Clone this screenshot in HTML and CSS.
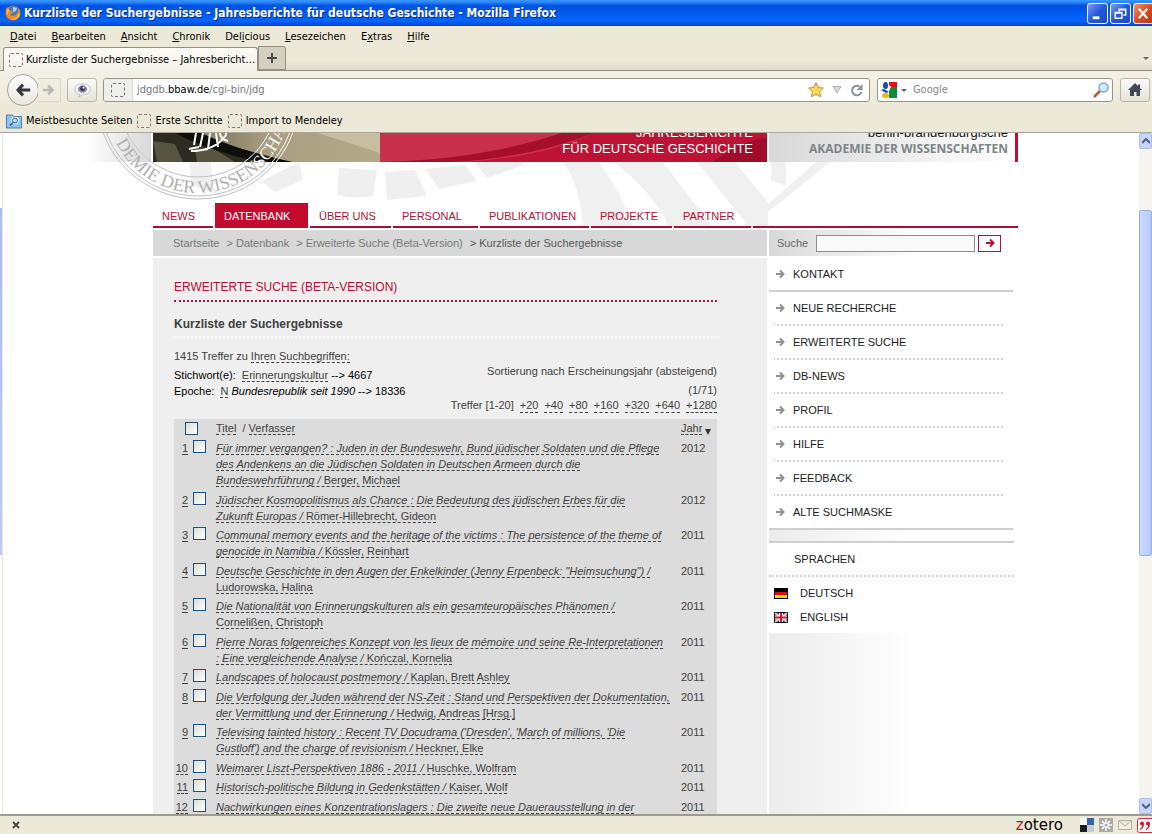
FILE: index.html
```html
<!DOCTYPE html>
<html lang="de">
<head>
<meta charset="utf-8">
<title>Kurzliste der Suchergebnisse - Jahresberichte für deutsche Geschichte</title>
<link rel="stylesheet" href="styles.css">
</head>
<body>
<div class="titlebar">
  <svg class="fox" viewBox="0 0 16 16"><circle cx="8" cy="8" r="7.5" fill="#e46a10"/><circle cx="8.5" cy="6" r="5" fill="#3c79c8"/><path d="M8 2l4 1-1 3-3 1z" fill="#a9d3f2"/><path d="M1 4l2-2 1 3 3 1 1 2-3 1 2 2 4-1 2-3 0-4 2 3c1 5-2 9-7 9S0 11 1 4z" fill="#f08a1c"/><path d="M3 3l1 3-2 4c-1-3 0-5 1-7zM13 10c-1 3-4 4-7 4 4 2 9-1 9-6z" fill="#ffc53a"/></svg>
  <h1 class="window-title">Kurzliste der Suchergebnisse - Jahresberichte für deutsche Geschichte - Mozilla Firefox</h1>
  <button class="winbtn" aria-label="Minimieren"><svg viewBox="0 0 20 20"><path d="M5 13h7v3H5z" fill="#fff"/></svg></button>
  <button class="winbtn" aria-label="Wiederherstellen"><svg viewBox="0 0 20 20"><path d="M8.500 8V5.500h7v6H13M4.500 9h7v6h-7z M4 9.500h8M8 6h8" fill="none" stroke="#fff" stroke-width="1.500"/></svg></button>
  <button class="winbtn close" aria-label="Schließen"><svg viewBox="0 0 20 20"><path d="M5 5l9 10M14 5l-9 10" stroke="#fff" stroke-width="2.200"/></svg></button>
</div>
<nav class="menubar">
  <a href="#"><u>D</u>atei</a><a href="#"><u>B</u>earbeiten</a><a href="#"><u>A</u>nsicht</a><a href="#"><u>C</u>hronik</a><a href="#">Del<u>i</u>cious</a><a href="#"><u>L</u>esezeichen</a><a href="#">E<u>x</u>tras</a><a href="#"><u>H</u>ilfe</a>
</nav>
<div class="tabs">
  <button class="tab"><span class="blank-icon"></span><span>Kurzliste der Suchergebnisse – Jahresbericht…</span></button>
  <button class="newtab" aria-label="Neuer Tab"><svg viewBox="0 0 12 12"><path d="M6 1v10M1 6h10" stroke="#454b50" stroke-width="2"/></svg></button>
  <span class="spacer"></span>
  <span class="caret"></span>
</div>
<div class="toolbar">
  <button class="back" aria-label="Zurück"><svg viewBox="0 0 20 20"><path d="M10 4L4.500 10l5.500 6M5 10h13" fill="none" stroke="#30383e" stroke-width="3.400"/></svg></button>
  <button class="forward" aria-label="Vor"><svg viewBox="0 0 16 16"><path d="M7 3l5 5-5 5M1 8h11" fill="none" stroke="#b4b7b6" stroke-width="3"/></svg></button>
  <button class="eye" aria-label="Vorschau"><svg viewBox="0 0 18 16"><path d="M9 1c5 0 8 2 8 6s-3 5-7 5l-5 3 1-3C3 11 1 9 1 7c0-4 3-6 8-6z" fill="#fff" stroke="#b4b4bb"/><ellipse cx="9" cy="6.500" rx="5" ry="4" fill="#8c8ca4"/><circle cx="9" cy="6" r="2.500" fill="#30304a"/><circle cx="10" cy="5" r="1" fill="#fff"/></svg></button>
  <div class="urlbox">
    <span class="identity"><span class="blank-icon"></span></span>
    <span class="url">jdgdb.<b>bbaw.de</b>/cgi-bin/jdg</span>
    <svg class="i16" viewBox="0 0 16 16"><path d="M8 .800l2.200 4.700 5.200.600-3.800 3.500 1 5.200L8 12.200l-4.600 2.600 1-5.200L.600 6.100l5.200-.600z" fill="#ffd75e" stroke="#c99137"/></svg>
    <svg class="i10" viewBox="0 0 10 10"><path d="M1 1.500h8L5 8z" fill="#d8d8de" stroke="#b0b0b6"/></svg>
    <svg class="i14" viewBox="0 0 14 14"><path d="M11.500 9A4.800 4.800 0 1 1 9.500 3.500" fill="none" stroke="#8b939c" stroke-width="2"/><path d="M12.500 1v6h-6z" fill="#8b939c"/></svg>
  </div>
  <div class="searchbox">
    <svg class="i16" viewBox="0 0 16 16"><path d="M8 0h8v5H8z" fill="#e01414"/><path d="M10 5h6v11H8V9q0-3 2-4z" fill="#118a3c"/><ellipse cx="4.500" cy="3.500" rx="2.500" ry="3.500" fill="#174bb0"/><path d="M0 8l3-1 5 3-3 1z" fill="#174bb0"/><ellipse cx="4.500" cy="13.500" rx="3.500" ry="2.500" fill="#f2b516"/><path d="M7 2l3 3-2 4z" fill="#fff"/></svg>
    <span class="caret"></span>
    <input aria-label="Google-Suche" placeholder="Google">
    <svg class="i16" viewBox="0 0 16 16"><path d="M1 15l6-6" stroke="#b4632c" stroke-width="2.600"/><circle cx="10.500" cy="5.500" r="4.500" fill="#d5ebfb" stroke="#84abd8" stroke-width="1.600"/></svg>
  </div>
  <button class="home" aria-label="Startseite"><svg viewBox="0 0 16 16"><path d="M8 1L1 8h2v6h4v-4h2.500v4H13V8h2l-2-2V2.500h-2V4z" fill="#3f4a54"/></svg></button>
</div>
<nav class="bookmarks">
  <a href="#"><svg class="i16" viewBox="0 0 16 16"><path d="M.500 2h6l1 1.500h8V15H.500z" fill="#8fc3ea" stroke="#3f83bb"/><circle cx="9" cy="7.500" r="2.500" fill="none" stroke="#fff" stroke-width="2.500"/><circle cx="9" cy="7.500" r="2.500" fill="#b9dcf5" stroke="#225f95"/><path d="M7 9.500l-3 3" stroke="#225f95" stroke-width="1.500"/></svg>Meistbesuchte Seiten</a>
  <a href="#"><span class="blank-icon"></span>Erste Schritte</a>
  <a href="#"><span class="blank-icon"></span>Import to Mendeley</a>
</nav>
<div class="viewport">
  <div class="window-edge"></div>
  <div class="page">
    <header class="header">
      <div class="side-fade"></div>
      <div class="photo"></div>
      <div class="redband"><p>JAHRESBERICHTE<br>FÜR DEUTSCHE GESCHICHTE</p></div>
      <div class="academy"><p><span>berlin-brandenburgische</span><br>AKADEMIE DER WISSENSCHAFTEN</p></div>
    </header>
    <svg class="artwork" viewBox="0 0 865 95" preserveAspectRatio="none">
      <path d="M36 29h22l2 25 12 10-34-12zM108 48l38-19 4 18-28 12zM186 35l38 2-4 26q-24 4-36-2zM232 39l30-2 12 26-40 4zM272 36l40-4 12 16-38 8zM322 29h50l-4 4-34 12z" fill="#efefef"/>
      <path d="M410 29h36q22 30 34 66h-50q-2-40-20-66zM460 29h50l50 66h-43q-20-40-57-66zM544 29h38l33 40v26h-18zM618 29h15v24l-15-6zM614 72l49-43h14l-49 40-14 10z" fill="#f0f0f0"/>
    </svg>
    <svg class="photo-art" viewBox="0 0 865 95" preserveAspectRatio="none">
      <path d="M0 0h30L137 29H0z" fill="#2c2b20"/><path d="M0 8l22 3 8 18H4zM42 16l16-2 24 15H44z" fill="#57543f"/>
      <path d="M22 0h26q44 20 92 29h-32Q60 20 22 0z" fill="#0e0f0d"/><path d="M165 0h62v20z" fill="#c9bda0"/>
      <path d="M227 29q100-2 182-29h32q-60 24-140 29z" fill="#a50f2b"/><path d="M440 0h174v29H315q80-6 125-29z" fill="#bd1334"/><path d="M560 29q30-22 54-24v24z" fill="#a10c2a"/>
      <g fill="none" stroke="#fff" stroke-width="2"><path d="M43 0l-2 12m9-12l-3 14m10-14l-2 16m8-16l2 14m2-14q0 6 8 8m-37 10q24 0 35-16l0-4M36 16l10-2m-3 4l12-2"/></g>
    </svg>
    <svg class="seal" viewBox="0 0 210 76">
      <defs><path id="ring" d="M11-29A92 92 0 0 0 195-29"/><clipPath id="onphoto"><path d="M58 3h152v29H58z"/></clipPath><clipPath id="offphoto"><path d="M0 3h58v29h152v47H0z"/></clipPath>
      <g id="sealart"><circle cx="103" cy="-32" r="101"/><circle cx="103" cy="-32" r="98"/><circle cx="103" cy="-32" r="79"/><text><textPath href="#ring" startOffset="15%">DEMIE DER WISSENSCHAFT</textPath></text></g></defs>
      <g class="ring-grey" clip-path="url(#offphoto)"><use href="#sealart"/></g>
      <g class="ring-white" clip-path="url(#onphoto)"><use href="#sealart"/></g>
    </svg>
    <nav class="nav">
      <a href="#" class="n1">NEWS</a><a href="#" class="n2 active">DATENBANK</a><a href="#" class="n3">ÜBER UNS</a><a href="#" class="n4">PERSONAL</a><a href="#" class="n5">PUBLIKATIONEN</a><a href="#" class="n6">PROJEKTE</a><a href="#" class="n7">PARTNER</a><span></span>
    </nav>
    <div class="strip">
      <div class="crumbs"><a href="#">Startseite</a><a href="#">&gt; Datenbank</a><a href="#">&gt; Erweiterte Suche (Beta-Version)</a><span>&gt; Kurzliste der Suchergebnisse</span></div>
      <form class="find"><label for="q">Suche</label><input id="q"><button type="button" aria-label="Suchen"><svg viewBox="0 0 10 10"><path d="M1 5h7M5 1.500L8.500 5 5 8.500" fill="none" stroke="#b40f35" stroke-width="2"/></svg></button></form>
    </div>
    <div class="columns">
      <main class="main">
        <h2>ERWEITERTE SUCHE (BETA-VERSION)</h2>
        <h3>Kurzliste der Suchergebnisse</h3>
        <div class="summary">
          <div class="terms">
            <p class="hits">1415 Treffer zu <a href="#">Ihren Suchbegriffen:</a></p>
            <p>Stichwort(e): &nbsp;<a href="#">Erinnerungskultur</a> --&gt; 4667</p>
            <p>Epoche: &nbsp;<a href="#">N</a> <i>Bundesrepublik seit 1990</i> --&gt; 18336</p>
          </div>
          <div class="sorting">
            <p class="sort">Sortierung nach Erscheinungsjahr (absteigend)</p>
            <p>(1/71)</p>
            <p class="pager"><span>Treffer [1-20]</span><a href="#">+20</a><a href="#">+40</a><a href="#">+80</a><a href="#">+160</a><a href="#">+320</a><a href="#">+640</a><a href="#">+1280</a></p>
          </div>
        </div>
        <table class="results">
          <colgroup><col class="c-num"><col class="c-check"><col><col class="c-year"></colgroup>
          <thead><tr><th colspan="2"><input type="checkbox" aria-label="Alle auswählen"></th><th><a href="#">Titel</a>&nbsp; / <a href="#">Verfasser</a></th><th><a href="#">Jahr</a><span class="sortmark"></span></th></tr></thead>
          <tbody>
          <tr><td><a href="#">1</a></td><td><input type="checkbox" aria-label="Treffer 1"></td><td><a href="#"><i>Für immer vergangen? : Juden in der Bundeswehr, Bund jüdischer Soldaten und die Pflege<br>des Andenkens an die Jüdischen Soldaten in Deutschen Armeen durch die<br>Bundeswehrführung /</i> Berger, Michael</a></td><td>2012</td></tr>
          <tr><td><a href="#">2</a></td><td><input type="checkbox" aria-label="Treffer 2"></td><td><a href="#"><i>Jüdischer Kosmopolitismus als Chance : Die Bedeutung des jüdischen Erbes für die<br>Zukunft Europas /</i> Römer-Hillebrecht, Gideon</a></td><td>2012</td></tr>
          <tr><td><a href="#">3</a></td><td><input type="checkbox" aria-label="Treffer 3"></td><td><a href="#"><i>Communal memory events and the heritage of the victims : The persistence of the theme of<br>genocide in Namibia /</i> Kössler, Reinhart</a></td><td>2011</td></tr>
          <tr><td><a href="#">4</a></td><td><input type="checkbox" aria-label="Treffer 4"></td><td><a href="#"><i>Deutsche Geschichte in den Augen der Enkelkinder (Jenny Erpenbeck: "Heimsuchung") /</i><br>Ludorowska, Halina</a></td><td>2011</td></tr>
          <tr><td><a href="#">5</a></td><td><input type="checkbox" aria-label="Treffer 5"></td><td><a href="#"><i>Die Nationalität von Erinnerungskulturen als ein gesamteuropäisches Phänomen /</i><br>Cornelißen, Christoph</a></td><td>2011</td></tr>
          <tr><td><a href="#">6</a></td><td><input type="checkbox" aria-label="Treffer 6"></td><td><a href="#"><i>Pierre Noras folgenreiches Konzept von les lieux de mémoire und seine Re-Interpretationen<br>: Eine vergleichende Analyse /</i> Kończal, Kornelia</a></td><td>2011</td></tr>
          <tr><td><a href="#">7</a></td><td><input type="checkbox" aria-label="Treffer 7"></td><td><a href="#"><i>Landscapes of holocaust postmemory /</i> Kaplan, Brett Ashley</a></td><td>2011</td></tr>
          <tr><td><a href="#">8</a></td><td><input type="checkbox" aria-label="Treffer 8"></td><td><a href="#"><i>Die Verfolgung der Juden während der NS-Zeit : Stand und Perspektiven der Dokumentation,<br>der Vermittlung und der Erinnerung /</i> Hedwig, Andreas [Hrsg.]</a></td><td>2011</td></tr>
          <tr><td><a href="#">9</a></td><td><input type="checkbox" aria-label="Treffer 9"></td><td><a href="#"><i>Televising tainted history : Recent TV Docudrama ('Dresden', 'March of millions, 'Die<br>Gustloff') and the charge of revisionism /</i> Heckner, Elke</a></td><td>2011</td></tr>
          <tr><td><a href="#">10</a></td><td><input type="checkbox" aria-label="Treffer 10"></td><td><a href="#"><i>Weimarer Liszt-Perspektiven 1886 - 2011 /</i> Huschke, Wolfram</a></td><td>2011</td></tr>
          <tr><td><a href="#">11</a></td><td><input type="checkbox" aria-label="Treffer 11"></td><td><a href="#"><i>Historisch-politische Bildung in Gedenkstätten /</i> Kaiser, Wolf</a></td><td>2011</td></tr>
          <tr><td><a href="#">12</a></td><td><input type="checkbox" aria-label="Treffer 12"></td><td><a href="#"><i>Nachwirkungen eines Konzentrationslagers : Die zweite neue Dauerausstellung in der</i></a></td><td>2011</td></tr>
          </tbody>
        </table>
      </main>
      <aside class="side">
        <a href="#" class="item solid"><svg viewBox="0 0 10 10"><path d="M1 5h7M5 1.500L8.500 5 5 8.500" fill="none" stroke="#909090" stroke-width="2"/></svg>KONTAKT</a>
        <a href="#" class="item"><svg viewBox="0 0 10 10"><path d="M1 5h7M5 1.500L8.500 5 5 8.500" fill="none" stroke="#909090" stroke-width="2"/></svg>NEUE RECHERCHE</a>
        <a href="#" class="item"><svg viewBox="0 0 10 10"><path d="M1 5h7M5 1.500L8.500 5 5 8.500" fill="none" stroke="#909090" stroke-width="2"/></svg>ERWEITERTE SUCHE</a>
        <a href="#" class="item"><svg viewBox="0 0 10 10"><path d="M1 5h7M5 1.500L8.500 5 5 8.500" fill="none" stroke="#909090" stroke-width="2"/></svg>DB-NEWS</a>
        <a href="#" class="item"><svg viewBox="0 0 10 10"><path d="M1 5h7M5 1.500L8.500 5 5 8.500" fill="none" stroke="#909090" stroke-width="2"/></svg>PROFIL</a>
        <a href="#" class="item"><svg viewBox="0 0 10 10"><path d="M1 5h7M5 1.500L8.500 5 5 8.500" fill="none" stroke="#909090" stroke-width="2"/></svg>HILFE</a>
        <a href="#" class="item"><svg viewBox="0 0 10 10"><path d="M1 5h7M5 1.500L8.500 5 5 8.500" fill="none" stroke="#909090" stroke-width="2"/></svg>FEEDBACK</a>
        <a href="#" class="item solid"><svg viewBox="0 0 10 10"><path d="M1 5h7M5 1.500L8.500 5 5 8.500" fill="none" stroke="#909090" stroke-width="2"/></svg>ALTE SUCHMASKE</a>
        <div class="gap"></div>
        <h4>SPRACHEN</h4>
        <a href="#" class="lang"><svg viewBox="0 0 14 11"><path d="M0 0h14v11H0z"/><path d="M1 4h12v3H1z" fill="#d81010"/><path d="M1 7h12v3H1z" fill="#ffd90f"/></svg>DEUTSCH</a>
        <a href="#" class="lang"><svg viewBox="0 0 14 11"><path d="M0 0h14v11H0z"/><path d="M1 1h12v9H1z" fill="#313c96"/><path d="M1 1l12 9M13 1L1 10" stroke="#f3bcc8" stroke-width="2"/><path d="M7 1v9M1 5.500h12" stroke="#fff" stroke-width="4"/><path d="M7 1v9M1 5.500h12" stroke="#d4142c" stroke-width="2"/></svg>ENGLISH</a>
        <div class="rest"></div>
      </aside>
    </div>
  </div>
  <div class="scrollbar"><button aria-label="Nach oben"><svg viewBox="0 0 8 6"><path d="M0 5l4-4 4 4" fill="none" stroke="#4d6185" stroke-width="2"/></svg></button><div class="upper"></div><div class="thumb"></div><div class="lower"></div><button aria-label="Nach unten"><svg viewBox="0 0 8 6"><path d="M0 1l4 4 4-4" fill="none" stroke="#4d6185" stroke-width="2"/></svg></button></div>
</div>
<footer class="status">
  <button aria-label="Leiste schließen"><svg viewBox="0 0 8 8"><path d="M1 1l6 6M7 1L1 7" stroke="#444" stroke-width="1.800"/></svg></button>
  <span class="spacer"></span>
  <span class="zotero"><b>z</b>otero</span>
  <svg class="i14" viewBox="0 0 14 14"><path d="M0 0h7v7H0z" fill="#f5f7fa"/><path d="M7 0h7v7H7z" fill="#3565ad"/><path d="M0 7h7v7H0z" fill="#1d1d25"/><path d="M7 7h7v7H7z" fill="#c8cbd0"/></svg>
  <svg class="i14" viewBox="0 0 14 14"><path d="M0 0h14v14H0z" fill="#a9a9a9"/><path d="M7 1v12M1 7h12M3 3l8 8M11 3l-8 8" stroke="#fff" stroke-width="1.500"/><circle cx="7" cy="7" r="1.500" fill="#a9a9a9"/></svg>
  <svg class="i14" viewBox="0 0 14 14"><path d="M.500 2.500h13v9H.500zM1 3l6 5 6-5" fill="#efede0" stroke="#b3b1a5"/></svg>
  <svg class="quote" viewBox="0 0 15 15"><rect x=".500" y=".500" width="18" height="14" rx="2" fill="#fff" stroke="#c33"/><path d="M3 5.500a2 2 0 1 1 4 0q0 5-4 6.500v-1q2-1.500 2-3.500-2 0-2-2zM9 5.500a2 2 0 1 1 4 0q0 5-4 6.500v-1q2-1.500 2-3.500-2 0-2-2z" fill="#c81e2c"/></svg>
</footer>
</body>
</html>
```
FILE: styles.css
```css
* { box-sizing: border-box; }
html, body { height: 100%; }
body { margin: 0; display: flex; flex-direction: column; overflow: hidden; background: #ece9d8; font: 11px/16px "DejaVu Sans Condensed", "DejaVu Sans", sans-serif; font-stretch: condensed; color: #000; }
a { color: inherit; text-decoration: none; }
button { padding: 0; font: inherit; color: inherit; display: flex; align-items: center; justify-content: center; flex: none; }
h1, h2, h3, h4, p { margin: 0; font-size: inherit; }
svg { display: block; flex: none; }
.spacer { flex: 1; }
.i16 { width: 16px; height: 16px; }
.i14 { width: 14px; height: 14px; }
.i10 { width: 10px; height: 10px; }
.blank-icon { width: 14px; height: 14px; border: 1px dashed #777; border-radius: 2px; flex: none; }
.caret { border: 3px solid transparent; border-top-color: #666; border-bottom: 0; flex: none; }

.titlebar { height: 26px; flex: none; display: flex; align-items: center; gap: 2px; padding-left: 5px; background: linear-gradient(#3c96ff 0, #2583f8 10%, #0050df 22%, #005af0 50%, #0066ff 80%, #0044c4 100%); }
.fox { width: 16px; height: 16px; }
.window-title { flex: 1; padding-left: 1px; font: bold 12px/16px "DejaVu Sans Condensed", "DejaVu Sans", sans-serif; font-stretch: condensed; color: #fff; text-shadow: 1px 1px #0a2a80; white-space: nowrap; }
.winbtn { width: 21px; height: 21px; border: 1px solid #fff; border-radius: 3px; background: linear-gradient(135deg, #7aa0ee, #2458d8 50%, #1b49c4); }
.winbtn svg { width: 19px; height: 19px; }
.winbtn.close { margin-right: -2px; background: linear-gradient(135deg, #ef9478, #dd4a22 50%, #c43210); }

.menubar { height: 21px; flex: none; display: flex; align-items: center; gap: 15px; padding: 0 10px; }
.tabs { height: 24px; flex: none; display: flex; align-items: flex-end; padding: 0 3px; border-bottom: 1px solid #919082; background: linear-gradient(#ece9d8 60%, #dfdccb); }
.tab { min-width: 250px; height: 24px; justify-content: flex-start; gap: 3px; padding: 0 2px 0 5px; white-space: nowrap; border: 1px solid #919082; border-bottom: 0; border-radius: 3px 3px 0 0; background: linear-gradient(#fbfaf6, #f4f2e9); margin-bottom: -1px; }
.newtab { width: 28px; height: 24px; border: 1px solid #919082; border-radius: 0 3px 0 0; background: #d3d0c0; }
.newtab svg { width: 12px; height: 12px; }
.tabs > .caret { margin: 0 0 10px; }

.toolbar { height: 38px; flex: none; display: flex; align-items: center; padding: 0 2px 0 7px; background: linear-gradient(#f3f1e7, #ece9d8); }
.toolbar button { border: 1px solid #b9b6a8; border-radius: 3px; background: linear-gradient(#fbfaf8, #e6e3d8); height: 24px; }
.toolbar .back { width: 32px; height: 32px; border-radius: 50%; border-color: #a5a397; background: linear-gradient(#fff, #e8e6dc); }
.back svg { width: 18px; height: 18px; }
.toolbar .forward { width: 23px; margin-left: -1px; border-left: 0; border-color: #d8d5c8; border-radius: 0 3px 3px 0; background: #efece0; }
.forward svg { width: 14px; height: 14px; }
.toolbar .eye { width: 30px; margin-left: 6px; }
.eye svg { width: 17px; height: 15px; }
.urlbox { flex: 773; height: 24px; margin-left: 6px; display: flex; align-items: center; gap: 8px; padding-right: 5px; overflow: hidden; border: 1px solid #98968a; border-radius: 3px; background: #fff; }
.identity { width: 29px; height: 22px; display: flex; align-items: center; justify-content: center; background: #eeeeea; border-right: 1px solid #dcdcd4; }
.url { flex: 1; margin-left: -4px; color: #777; }
.url b { font-weight: normal; color: #000; }
.searchbox { flex: 232; min-width: 0; height: 24px; margin-left: 7px; display: flex; align-items: center; gap: 4px; padding: 0 3px; border: 1px solid #98968a; border-radius: 3px; background: #fff; }
.searchbox input { flex: 1; min-width: 0; border: 0; outline: 0; padding: 0 2px; font: inherit; background: none; }
.searchbox input::placeholder { color: #888; }
.toolbar .home { width: 30px; margin-left: 7px; }
.home svg { width: 16px; height: 16px; }
.bookmarks { height: 24px; flex: none; display: flex; align-items: center; gap: 5px; padding: 0 6px; border-bottom: 1px solid #aaa798; }
.bookmarks a { display: flex; align-items: center; gap: 4px; }

.viewport { flex: 1; min-height: 0; display: flex; overflow: hidden; background: #fff; }
.window-edge { width: 3px; flex: none; border-right: 1px solid #ece9d8; background: linear-gradient(#fff 11%, #a8c0ec 11%, #b8ccf4 62%, #fff 62%); }
.page { flex: 1; min-width: 0; position: relative; padding-left: 150px; display: flex; flex-direction: column; font: 11px/16px "Liberation Sans", Arial, sans-serif; font-stretch: normal; color: #404040; }
.header, .nav, .strip, .columns { width: 100%; max-width: 865px; flex: none; }
.header { height: 29px; display: grid; grid-template-columns: 227fr 387fr 251fr; position: relative; }
.side-fade { position: absolute; right: 100%; top: 0; width: 66px; height: 29px; background: linear-gradient(90deg, #fff, #d8d8d8); border-right: 2px solid #fff; }
.photo { background: linear-gradient(90deg, #8f876c 35%, #a89d80 50%, #b5a98b); }
.redband { min-width: 0; display: flex; flex-direction: column; justify-content: flex-end; overflow: hidden; padding: 0 14px 5px 0; text-align: right; background: #c9304b; color: #fff; font-size: 13px; line-height: 16px; }
.redband p, .academy p { position: relative; z-index: 2; }
.academy { min-width: 0; display: flex; flex-direction: column; justify-content: flex-end; overflow: hidden; margin-left: 2px; padding: 0 7px 5px 0; border-right: 3px solid #c30d32; text-align: right; background: linear-gradient(90deg, #d8d8d8, #fff); font: bold 13px/16px "Open Sans", sans-serif; color: #7e8587; white-space: nowrap; }
.academy p { font-size: 12px; }
.academy span { color: #111; font: 13px/16px "Liberation Sans", Arial, sans-serif; }
.artwork, .photo-art { position: absolute; left: 150px; top: 0; width: calc(100% - 150px); max-width: 865px; height: 95px; }
.seal { position: absolute; left: 92px; top: -3px; width: 210px; height: 76px; }
.seal circle { fill: none; stroke: inherit; stroke-width: 1; }
.seal text { font: 18px "Liberation Serif", serif; stroke: none; fill: inherit; }
.ring-grey { stroke: #c0c0c0; fill: #b0b0b0; }
.ring-white { stroke: #fff; fill: #fff; }

.nav { height: 66px; display: flex; align-items: flex-end; gap: 2px; position: relative; color: #b40f35; }
.nav a, .nav span { height: 25px; padding: 5px 0 0 9px; border-bottom: 2px solid #a80f34; white-space: nowrap; }
.nav .active { background: #c30a2e; color: #fff; border-color: #c30a2e; }
.n1 { width: 60px; } .n2 { width: 93px; } .n3 { width: 81px; } .n4 { width: 85px; } .n5 { width: 109px; } .n6 { width: 81px; } .n7 { width: 77px; }
.nav span { flex: 1; }
.strip, .columns { display: grid; grid-template-columns: 614fr 249fr; gap: 2px; padding-top: 2px; }
.crumbs { min-width: 0; height: 26px; display: flex; align-items: center; gap: 7px; padding-left: 20px; background: #d8d8d8; color: #777; white-space: nowrap; }
.crumbs span { color: #555; }
.find { min-width: 0; display: flex; align-items: center; padding: 0 17px 0 8px; background: linear-gradient(90deg, #d8d8d8, #fff 60%); color: #666; }
.find input { flex: 1; min-width: 0; height: 17px; margin: 0 3px 0 8px; padding: 0 3px; border: 1px solid #8d8d8d; background: #f9f9f9; font: inherit; }
.find button { width: 23px; height: 17px; border: 1px solid #b40f35; background: #fff; }
.find button svg { width: 10px; height: 10px; }

.columns { grid-template-rows: minmax(0, 1fr); flex: 1; min-height: 0; }
.main { min-width: 0; padding: 20px 50px 0 21px; background: #efefef; overflow: hidden; }
.main h2 { height: 24px; padding-bottom: 6px; border-bottom: 2px dotted #a51c42; font-weight: normal; font-size: 12px; line-height: 18px; color: #b40f35; }
.main h3 { margin-top: 14px; padding-bottom: 4px; border-bottom: 2px dotted #fff; font-size: 12px; line-height: 16px; }
.summary { display: flex; justify-content: space-between; padding: 10px 0 6px; white-space: nowrap; }
.summary a, .results a { border-bottom: 1px dashed #404040; color: #404040; }
.terms { color: #000; }
.hits { margin-bottom: 3px; color: #404040; }
.sorting { text-align: right; line-height: 15px; padding-top: 16px; }
.sort { margin-bottom: 4px; }
.pager { display: flex; gap: 6px; justify-content: flex-end; }
.pager a { line-height: 14px; }
.results { width: 100%; table-layout: fixed; border-collapse: collapse; background: #dcdcdc; }
.results th, .results td { padding: 0 0 4px; vertical-align: top; text-align: left; font-weight: normal; white-space: nowrap; }
.results tbody tr:nth-child(even) td { padding-bottom: 3px; }
.results th:nth-child(1) { padding-left: 11px; }
.results thead th { padding-top: 1px; }
.c-num { width: 14px; }
.c-check { width: 28px; }
.c-year { width: 36px; }
.results td:nth-child(1) { text-align: right; }
.results td:nth-child(2) { padding-left: 5px; }
.results input { appearance: none; display: block; width: 13px; height: 13px; margin: 0; border: 1px solid #1d5080; background: linear-gradient(135deg, #dcdcd7, #fff); }
.results thead input { margin-top: 2px; }
.sortmark { display: inline-block; margin-left: 3px; vertical-align: -3px; border: 3px solid transparent; border-top: 6px solid #333; border-bottom: 0; }

.side { min-width: 0; display: flex; flex-direction: column; color: #222; }
.item { height: 34px; flex: none; display: flex; align-items: center; gap: 8px; padding: 0 0 2px 6px; margin-right: 15px; background: linear-gradient(90deg, #fff 5px, transparent 5px) bottom / 100% 2px no-repeat, repeating-linear-gradient(90deg, #d4d4d4 0 2px, transparent 2px 4px) bottom / 100% 2px no-repeat; }
.item.solid { margin-right: 5px; background: linear-gradient(#cfcfcf, #cfcfcf) bottom / 100% 2px no-repeat; }
.item svg { width: 10px; height: 10px; }
.gap { height: 13px; margin-right: 4px; flex: none; border-bottom: 2px solid #cfcfcf; background: linear-gradient(90deg, #ececec, #fff 60%); }
.side h4 { height: 34px; flex: none; margin-right: 4px; padding: 8px 0 0 25px; border-bottom: 2px dotted #d4d4d4; font-weight: normal; }
.lang { height: 24px; flex: none; display: flex; align-items: center; gap: 12px; padding-left: 5px; }
h4 + .lang { margin-top: 4px; }
.lang svg { width: 14px; height: 11px; }
.rest { flex: 1; margin-top: 4px; background: linear-gradient(90deg, #ececec, #fff 60%); }

.scrollbar { width: 13px; flex: none; display: flex; flex-direction: column; background: #f5f4ee; }
.scrollbar button { height: 16px; border: 1px solid #a9bfe8; border-radius: 2px; background: #c6d6fb; }
.scrollbar svg { width: 8px; height: 6px; }
.upper { flex: 61; }
.thumb { flex: 345; border: 1px solid #96b0e4; border-radius: 2px; background: linear-gradient(90deg, #cadafd, #b6cbf8); }
.lower { flex: 243; }
.status { height: 20px; flex: none; display: flex; align-items: center; gap: 5px; padding-left: 12px; border-top: 2px solid #9c9b8d; background: #ece9d8; }
.status button { border: 0; background: none; }
.status button svg { width: 8px; height: 8px; }
.zotero { margin-right: 12px; font: 15px/16px "DejaVu Sans", sans-serif; }
.zotero b { color: #a81c1c; font-weight: normal; }
.quote { width: 15px; height: 15px; }
```
